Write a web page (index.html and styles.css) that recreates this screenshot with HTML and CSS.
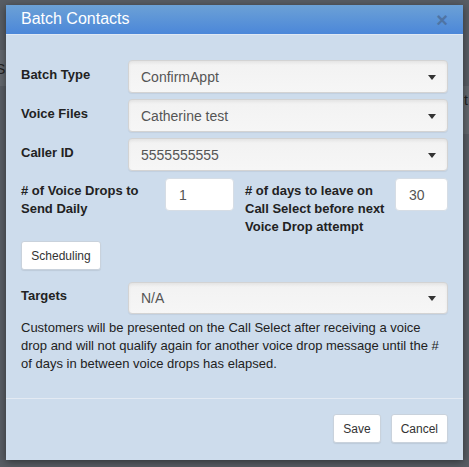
FILE: index.html
```html
<!DOCTYPE html>
<html>
<head>
<meta charset="utf-8">
<link rel="stylesheet" href="styles.css">
</head>
<body>
<div class="backdrop">
  <div class="bg-band bg-left"><span>S</span></div>
  <div class="bg-band bg-right"><span>t</span></div>
</div>
<div class="modal">
  <div class="modal-header">
    <h4 class="modal-title">Batch Contacts</h4>
    <span class="close">×</span>
  </div>
  <div class="modal-body">
    <div class="form-row">
      <label class="control-label">Batch Type</label>
      <div class="select"><span>ConfirmAppt</span><i class="caret"></i></div>
    </div>
    <div class="form-row">
      <label class="control-label">Voice Files</label>
      <div class="select"><span>Catherine test</span><i class="caret"></i></div>
    </div>
    <div class="form-row">
      <label class="control-label">Caller ID</label>
      <div class="select"><span>5555555555</span><i class="caret"></i></div>
    </div>
    <div class="drops-row">
      <label class="control-label">
        # of Voice Drops to Send Daily</label>
      <div class="num-input">1</div>
      <label class="control-label label-days"># of days to leave on Call Select before next Voice Drop attempt</label>
      <div class="num-input num-days">30</div>
    </div>
    <button class="btn btn-sched">Scheduling</button>
    <div class="form-row targets-row">
      <label class="control-label">Targets</label>
      <div class="select select-targets"><span>N/A</span><i class="caret"></i></div>
    </div>
    <p class="help-text">Customers will be presented on the Call Select after receiving a voice drop and will not qualify again for another voice drop message until the # of days in between voice drops has elapsed.</p>
  </div>
  <div class="modal-footer">
    <button class="btn">Save</button>
    <button class="btn">Cancel</button>
  </div>
</div>
</body>
</html>
```
FILE: styles.css
```css
* { box-sizing: border-box; }
html, body {
  margin: 0;
  padding: 0;
  width: 469px;
  height: 467px;
  overflow: hidden;
}
body {
  background: #585d64;
  font-family: "Liberation Sans", Arial, sans-serif;
  color: #222;
  position: relative;
}
.backdrop {
  position: absolute;
  inset: 0;
}
.bg-band {
  position: absolute;
  background: #63686e;
  color: #222;
  font-size: 14px;
  overflow: hidden;
}
.bg-left { left: 0; top: 50px; width: 6px; height: 36px; }
.bg-left span { position: absolute; left: -4px; top: 11px; }
.bg-right { right: 0; top: 86px; width: 6px; height: 48px; }
.bg-right span { position: absolute; left: 1px; top: 6px; }

.modal {
  position: relative;
  margin: 5px 0 0 6px;
  width: 457px;
  height: 455px;
  background: #cddcec;
  box-shadow: 0 2px 8px rgba(0, 0, 0, 0.45);
}
.modal-header {
  height: 30px;
  background: linear-gradient(#6ca1d6, #4b87d9);
  border-bottom: 1px solid #dfe8f3;
  padding: 0 15px;
  display: flex;
  align-items: center;
  justify-content: space-between;
}
.modal-title {
  margin: 0;
  color: #fff;
  font-weight: normal;
  font-size: 16px;
  line-height: 20px;
  margin-top: -2px;
}
.close {
  color: #4d6f9c;
  font-weight: bold;
  font-size: 20px;
  line-height: 20px;
  opacity: 0.85;
  margin-right: 0;
  margin-top: 1px;
}
.modal-body {
  padding: 25px 15px 25px 15px;
}
.form-row {
  display: grid;
  grid-template-columns: 107px 320px;
  margin-bottom: 6px;
}
.control-label {
  font-weight: bold;
  font-size: 13px;
  line-height: 18px;
  padding-top: 6px;
  color: #222;
}
.select {
  position: relative;
  height: 33px;
  background: linear-gradient(#f2f2f2, #f6f6f6);
  border: 1px solid #d3d3d3;
  border-radius: 4px;
  box-shadow: inset 0 2px 3px rgba(0, 0, 0, 0.06), 0 1px 1px rgba(0, 0, 0, 0.06);
  font-size: 14px;
  color: #555;
  padding: 0 12px;
  display: flex;
  align-items: center;
}
.caret {
  position: absolute;
  right: 11px;
  top: 14px;
  width: 0;
  height: 0;
  border-top: 5px solid #333;
  border-left: 4px solid transparent;
  border-right: 4px solid transparent;
}
.drops-row {
  display: grid;
  grid-template-columns: 144px 69px 161px 53px;
  align-items: start;
  margin-top: 7px;
}
.drops-row .control-label { padding-top: 4px; }
.drops-row .label-days { padding-left: 11px; }
.num-input {
  height: 33px;
  background: #fff;
  border: 1px solid #d6dde5;
  border-radius: 4px;
  font-size: 14px;
  color: #555;
  padding: 0 13px;
  display: flex;
  align-items: center;
}
.btn {
  font-family: "Liberation Sans", Arial, sans-serif;
  font-size: 12px;
  color: #333;
  background: #fff;
  border: 1px solid #c9d2dc;
  border-radius: 3px;
  box-shadow: 0 1px 1px rgba(0, 0, 0, 0.08);
  height: 29px;
  padding: 0 10px;
  cursor: pointer;
}
.btn-sched {
  display: block;
  margin-top: 5px;
  width: 80px;
  padding: 0;
}
.targets-row {
  margin-top: 12px;
  margin-bottom: 0;
}
.select-targets { height: 32px; }
.select-targets .caret { top: 13px; }
.targets-row .control-label { padding-top: 5px; }
.help-text {
  margin: 5px 0 0 0;
  font-size: 13px;
  line-height: 18px;
  color: #222;
}
.modal-footer {
  border-top: 1px solid #e3eaf3;
  padding: 15px 15px 0 15px;
  display: flex;
  justify-content: flex-end;
  gap: 10px;
}
.modal-footer .btn { height: 29px; padding: 0 9px; }
```
